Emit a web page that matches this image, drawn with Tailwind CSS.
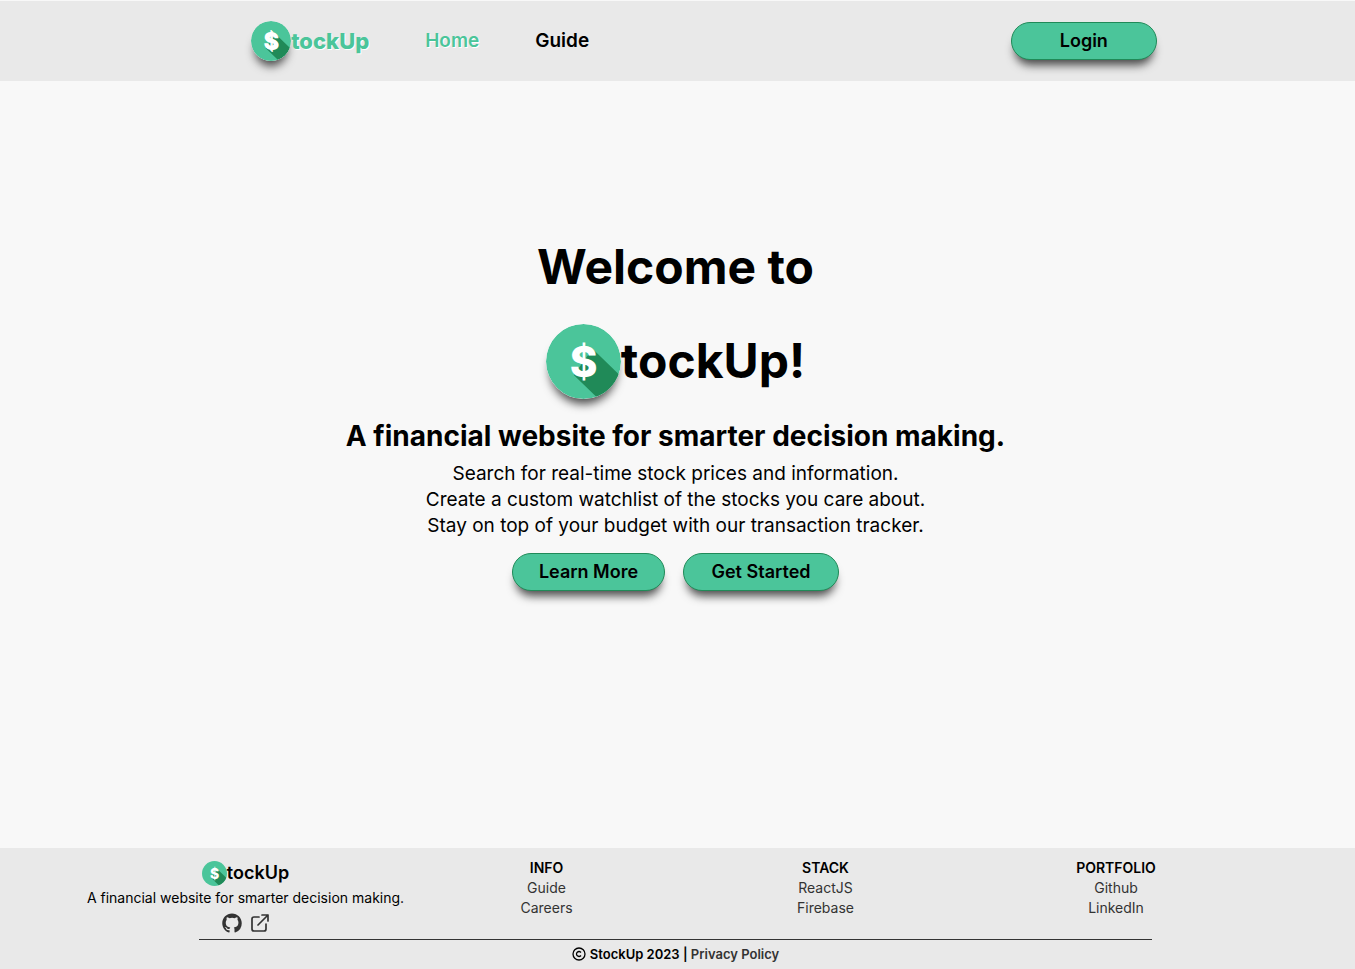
<!DOCTYPE html>
<html lang="en">
<head>
<meta charset="utf-8">
<meta name="viewport" content="width=device-width, initial-scale=1">
<title>StockUp</title>
<script src="https://cdn.jsdelivr.net/npm/@tailwindcss/browser@4"></script>
</head>
<body class="flex min-h-screen flex-col bg-[#f8f8f8] font-['Inter','Liberation_Sans',sans-serif] text-black">
<svg class="hidden" aria-hidden="true">
  <symbol id="coin" viewBox="0 0 100 100">
    <circle cx="50" cy="50" r="50" fill="#4bc59a"/>
    <path d="M62 33 L97 67 A50 50 0 0 1 67 97 L37 68 L50 50Z" fill="#208a58"/>
    <text x="50" y="70" text-anchor="middle" font-family="Inter, sans-serif" font-weight="800" font-size="56" fill="#fff">$</text>
  </symbol>
</svg>

<header class="mt-px bg-[#e9e9e9] pr-0.5">
  <nav class="mx-auto flex h-20 w-[71%] items-center justify-between pl-[55px]">
    <div class="flex items-center gap-14 text-[19px] font-semibold">
      <a href="#" class="flex items-center text-[22px] font-extrabold text-[#4bc59a] [text-shadow:1px_1px_white]">
        <svg class="size-10 rounded-full shadow-[0_9px_10px_-4px_rgba(0,0,0,0.7)]"><use href="#coin"/></svg>tockUp
      </a>
      <a href="#" class="text-[#4bc59a] [text-shadow:1px_1px_white]">Home</a>
      <a href="#guide">Guide</a>
    </div>
    <button class="h-[38px] w-[146px] rounded-full border border-[#208a58] bg-[#4bc59a] text-lg font-semibold shadow-[0_9px_10px_-4px_rgba(0,0,0,0.7)]">Login</button>
  </nav>
</header>

<main class="flex grow flex-col items-center justify-center pr-1 pb-[118px] text-center">
  <h1 class="flex flex-col items-center text-5xl font-bold">
    <span class="flex h-[94px] items-center">Welcome to</span>
    <span class="flex h-[94px] items-center">
      <svg class="size-[75px] rounded-full shadow-[0_9px_10px_-4px_rgba(0,0,0,0.7)]"><use href="#coin"/></svg>tockUp!
    </span>
  </h1>
  <h2 class="mt-2 text-[28px] leading-10 font-bold">A financial website for smarter decision making.</h2>
  <p class="mt-[5px] text-[19px] leading-[26px]">Search for real-time stock prices and information.<br>Create a custom watchlist of the stocks you care about.<br>Stay on top of your budget with our transaction tracker.</p>
  <div class="mt-3.5 flex gap-[18px] text-lg font-semibold">
    <button class="h-[38px] w-[153px] rounded-full border border-[#208a58] bg-[#4bc59a] shadow-[0_9px_10px_-4px_rgba(0,0,0,0.7)]">Learn More</button>
    <button class="h-[38px] w-[156px] rounded-full border border-[#208a58] bg-[#4bc59a] shadow-[0_9px_10px_-4px_rgba(0,0,0,0.7)]">Get Started</button>
  </div>
</main>

<footer class="bg-[#e9e9e9] pt-2.5 pr-1 text-center text-sm leading-5">
  <div class="mr-[84px] ml-[84px] grid grid-cols-[323fr_279fr_279fr_302fr] text-[#333]">
    <section class="flex flex-col items-center text-black">
      <a href="#" class="flex h-[30px] items-center text-lg font-semibold"><svg class="size-[25px]"><use href="#coin"/></svg>tockUp</a>
      <p class="whitespace-nowrap">A financial website for smarter decision making.</p>
      <div class="mt-[5px] flex gap-2 text-[#333]">
        <a href="#github" aria-label="GitHub"><svg class="size-5" viewBox="0 0 24 24" fill="currentColor"><path d="M12 .6C5.400.6.300 5.900.300 12.300c0 5.200 3.400 9.600 8 11.100.600.100.800-.300.800-.600v-2.200c-3.300.700-4-1.400-4-1.400-.500-1.400-1.300-1.800-1.300-1.800-1.100-.700.100-.700.100-.700 1.200.100 1.800 1.200 1.800 1.200 1.100 1.800 2.800 1.300 3.500 1 .100-.800.400-1.300.800-1.600-2.700-.300-5.500-1.300-5.500-5.900 0-1.300.500-2.400 1.200-3.200-.100-.300-.500-1.500.100-3.200 0 0 1-.300 3.300 1.200a11.500 11.500 0 0 1 6 0C17.400 4.700 18.400 5 18.400 5c.700 1.700.200 2.900.100 3.200.800.800 1.200 1.900 1.200 3.200 0 4.600-2.800 5.600-5.500 5.900.400.400.800 1.100.800 2.200v3.300c0 .300.200.700.800.600a11.700 11.700 0 0 0 7.900-11.100C23.700 5.900 18.500.6 12 .6Z"/></svg></a>
        <a href="#site" aria-label="Open site"><svg class="size-5" viewBox="0 0 20 20" fill="none" stroke="currentColor" stroke-width="1.700" stroke-linecap="round" stroke-linejoin="round"><path d="M9 4H4Q2 4 2 6v10q0 2 2 2h10q2 0 2-2v-5M8 12 18 2M12 2h6v6"/></svg></a>
      </div>
    </section>
    <section class="flex flex-col items-center">
      <h3 class="font-semibold text-black">INFO</h3>
      <a href="#guide">Guide</a>
      <a href="#careers">Careers</a>
    </section>
    <section class="flex flex-col items-center">
      <h3 class="font-semibold text-black">STACK</h3>
      <a href="#react">ReactJS</a>
      <a href="#firebase">Firebase</a>
    </section>
    <section class="flex flex-col items-center">
      <h3 class="font-semibold text-black">PORTFOLIO</h3>
      <a href="#github">Github</a>
      <a href="#linkedin">LinkedIn</a>
    </section>
  </div>
  <div class="mx-auto mt-1.5 flex w-[953px] max-w-full items-center justify-center border-t border-[#333] pt-1 pb-[5px] text-[13px] leading-5 font-semibold">
    <svg class="mr-1 size-3.5" viewBox="0 0 14 14" fill="none" stroke="currentColor" stroke-width="1.300" aria-label="Copyright"><circle cx="7" cy="7" r="6"/><path d="M9 5.500A2.500 2.500 0 1 0 9 8.500"/></svg>
    <span>StockUp 2023 | <a href="#privacy" class="text-[#333]">Privacy Policy</a></span>
  </div>
</footer>
</body>
</html>
